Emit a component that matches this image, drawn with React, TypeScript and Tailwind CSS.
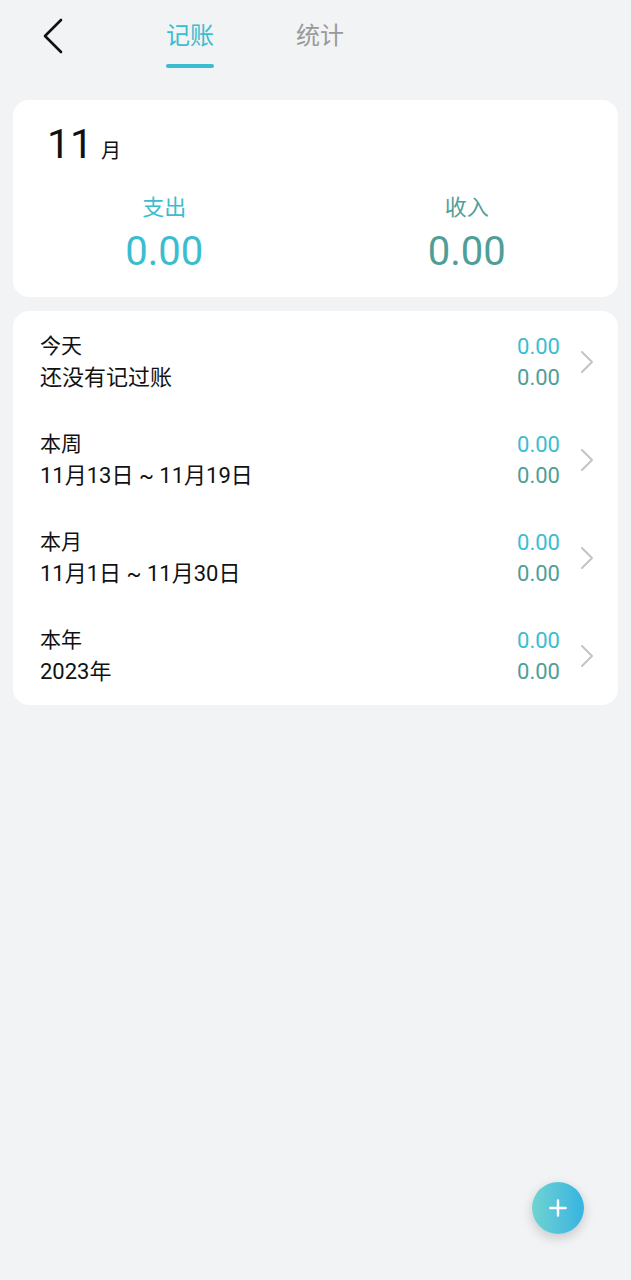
import { Plus } from 'lucide-react';

type Row = { title: string; sub: string };

const ROWS: Row[] = [
  { title: '今天', sub: '还没有记过账' },
  { title: '本周', sub: '11月13日 ~ 11月19日' },
  { title: '本月', sub: '11月1日 ~ 11月30日' },
  { title: '本年', sub: '2023年' },
];

const FONT = "font-['Roboto','Noto_Sans_CJK_SC',sans-serif]";

function Chevron() {
  return (
    <svg width="14" height="24" viewBox="0 0 14 24" fill="none" className="shrink-0">
      <path d="M2 2l10 10L2 22" stroke="#c4c4c4" strokeWidth="2" strokeLinecap="round" strokeLinejoin="round" />
    </svg>
  );
}

export default function App() {
  return (
    <div className={`relative min-h-[1280px] bg-[#f2f3f5] ${FONT}`}>
      {/* ── Header ── */}
      <header className="flex items-start h-[100px] pt-[18px]">
        <button className="ml-[40px] w-[26px] h-[36px] flex items-center justify-center">
          <svg width="22" height="36" viewBox="0 0 22 36" fill="none">
            <path d="M19 2L3 18l16 16" stroke="#111" strokeWidth="2.6" strokeLinecap="round" strokeLinejoin="round" />
          </svg>
        </button>
        <div className="ml-[100px] flex gap-[82px]">
          <div className="flex flex-col items-center">
            <span className="text-[24px] leading-[36px] text-[#3bbdd0]">记账</span>
            <span className="mt-[10px] w-[48px] h-[4px] rounded-full bg-[#3bbdd0]" />
          </div>
          <span className="text-[24px] leading-[36px] text-[#9a9a9a]">统计</span>
        </div>
      </header>

      {/* ── Month summary ── */}
      <section className="mx-[13px] rounded-[16px] bg-white h-[197px] pt-[22px]">
        <div className="flex items-baseline pl-[34px]">
          <span className="text-[41px] leading-[44px] text-[#111]">11</span>
          <span className="ml-[8px] text-[20px] text-[#111]">月</span>
        </div>
        <div className="grid grid-cols-2 mt-[27px]">
          <div className="flex flex-col items-center">
            <span className="text-[22px] leading-[30px] text-[#3bbdd0]">支出</span>
            <span className="mt-[5px] text-[40px] leading-[48px] text-[#3bbdd0]">0.00</span>
          </div>
          <div className="flex flex-col items-center">
            <span className="text-[22px] leading-[30px] text-[#4f9e98]">收入</span>
            <span className="mt-[5px] text-[40px] leading-[48px] text-[#4f9e98]">0.00</span>
          </div>
        </div>
      </section>

      {/* ── Periods ── */}
      <section className="mx-[13px] mt-[14px] rounded-[16px] bg-white pt-[2px]">
        {ROWS.map((row) => (
          <div key={row.title} className="flex items-center h-[98px] pl-[27px] pr-[24px]">
            <div className="flex-1 flex flex-col leading-[31px] text-[#111]">
              <span className="text-[21px]">{row.title}</span>
              <span className="text-[22px]">{row.sub}</span>
            </div>
            <div className="flex flex-col items-end text-[22px] leading-[31px]">
              <span className="text-[#3bbdd0]">0.00</span>
              <span className="text-[#4f9e98]">0.00</span>
            </div>
            <div className="ml-[20px]">
              <Chevron />
            </div>
          </div>
        ))}
      </section>

      {/* ── Add button ── */}
      <button className="absolute left-[532px] top-[1182px] w-[52px] h-[52px] rounded-full bg-gradient-to-r from-[#6fd3d0] to-[#35b3e2] shadow-[0_4px_12px_rgba(0,0,0,0.18)] flex items-center justify-center">
        <Plus className="w-[26px] h-[26px] text-white" strokeWidth={2.2} />
      </button>
    </div>
  );
}
